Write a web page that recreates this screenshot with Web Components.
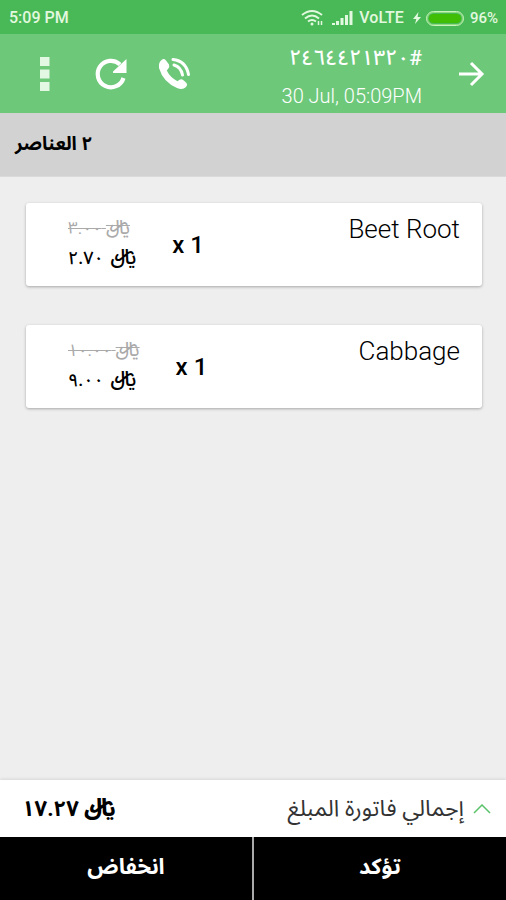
<!DOCTYPE html>
<html lang="ar" dir="rtl">
<head>
<meta charset="utf-8">
<meta name="viewport" content="width=device-width, initial-scale=1">
<title>Order</title>
<style>
html, body { margin: 0; }
body { font-family: Roboto, "Noto Sans Arabic", "DejaVu Sans", sans-serif; background: #eeeeee; color: #000; }
</style>
</head>
<body>
<order-screen></order-screen>
<script>
const define = (name, html, setup) => customElements.define(name, class extends HTMLElement {
  connectedCallback() {
    if (this.shadowRoot) return;
    const t = document.createElement('template');
    t.innerHTML = '<style>*{box-sizing:border-box}</style>' + html;
    this.attachShadow({ mode: 'open' }).append(t.content.cloneNode(true));
    if (setup) setup(this, this.shadowRoot);
  }
});

define('status-bar', `
<style>
:host { display: flex; direction: ltr; align-items: center; height: 34px; padding: 2px 8px 0 9px; background: #49b957; color: #e2f8df; font-size: 16px; line-height: 20px; font-weight: 500; }
.time { flex: 1; }
.wifi { margin-right: 8px; }
.signal { margin-right: 6px; }
.bolt { margin: 0 5px 0 9px; }
.battery { width: 38px; height: 15px; margin-right: 6px; padding: 2px; border: 1px solid #c9f3bd; border-radius: 8px; box-shadow: inset 0 0 0 1px #8fdc7c; }
.battery::before { content: ""; display: block; height: 100%; border-radius: 5px; background: #3fbe05; }
.pct { font-size: 15px; }
svg { display: block; }
</style>
<span class="time">5:09 PM</span>
<svg class="wifi" width="23" height="18" viewBox="0 0 23 18" fill="none" stroke="currentColor" stroke-width="2"><path d="M1 6Q11 -2 21 6M4 9.500Q11 3.500 18 9.500M7 12.500Q11 9.500 15 12.500"/><circle cx="11" cy="15" r="1.500" fill="currentColor" stroke="none"/><path d="M17.500 12v4M20.500 12v4" stroke-width="1.500"/></svg>
<svg class="signal" width="21" height="16" viewBox="0 0 21 16" fill="currentColor"><path d="M0 13h3v2H0zM4 11h3v4H4zM8.500 8h3v7h-3zM13 5h3v10h-3zM17.500 1h3v14h-3z"/></svg>
<span>VoLTE</span>
<svg class="bolt" width="8" height="12" viewBox="0 0 8 12" fill="currentColor"><path d="M5.500 0L0 7h3.300L2 12 8 5H4.600z"/></svg>
<span class="battery"></span>
<span class="pct">96%</span>`);

define('icon-button', `
<style>
:host { display: block; }
button { display: grid; place-items: center; width: 100%; height: 48px; padding: 0; border: 0; background: none; color: inherit; cursor: pointer; }
</style>
<button type="button"><slot></slot></button>`, (host, root) => root.querySelector('button').setAttribute('aria-label', host.getAttribute('label')));

define('app-header', `
<style>
:host { display: flex; align-items: center; height: 79px; padding: 0 9px 0 11px; background: #6dc87a; color: #fff; }
.titles { flex: 1; display: flex; flex-direction: column; gap: 12px; padding: 5px 23px 0 0; }
.id { font-size: 21px; line-height: 28px; font-weight: 500; }
.date { direction: ltr; text-align: right; font-size: 20px; line-height: 24px; font-weight: 300; }
icon-button { width: 52px; }
.call { width: 62px; }
.more { width: 68px; }
.refresh { width: 64px; }
svg { display: block; }
</style>
<icon-button label="Back"><svg width="28" height="26" viewBox="0 0 28 26" fill="none" stroke="currentColor" stroke-width="3"><path d="M2 13h23M14 2l11 11-11 11"/></svg></icon-button>
<div class="titles"><span class="id">#٢٤٦٤٤٢١٣٢٠</span><span class="date">30 Jul, 05:09PM</span></div>
<icon-button class="call" label="Call"><svg width="34" height="34" viewBox="0 0 34 34"><path fill="currentColor" d="M4.500 3Q7 1 9 3.500L12 7.500Q13 10 11 12L9.800 13.600Q13 20.500 20.500 24.200L22.500 22.800Q24.500 21.700 26.500 23.300L29.500 26Q31 28 29 30Q25.500 33.500 20 31Q6 25 2 11Q1.300 5.500 4.500 3Z"/><path fill="none" stroke="currentColor" stroke-width="3" stroke-linecap="round" d="M17 8Q24 10 25.500 18M16 2.500Q29 4 31.500 17.500"/></svg></icon-button>
<icon-button class="refresh" label="Refresh"><svg width="34" height="34" viewBox="0 0 34 34"><path fill="none" stroke="currentColor" stroke-width="4.200" d="M26 7.500A13.200 13.200 0 1 0 29.500 21"/><path fill="currentColor" d="M32.500 2v14H19V14.500z"/></svg></icon-button>
<icon-button class="more" label="More"><svg width="10" height="34" viewBox="0 0 10 34" fill="#e2f8e2"><path d="M0 0h9.500v9H0zM0 12.500h9.500v9H0zM0 25h9.500v9H0z"/></svg></icon-button>`);

define('section-title', `
<style>
:host { display: block; direction: ltr; height: 64px; padding: 18px 15px; background: #d2d2d2; border-bottom: 1px solid #dadada; }
h2 { margin: 0; direction: rtl; width: fit-content; font-size: 19px; line-height: 26px; font-weight: 700; }
</style>
<h2><slot></slot></h2>`);

define('riyal-price', `
<style>
:host { display: inline; }
.sign { font-size: var(--sign-size, 20px); line-height: 1; padding-left: var(--sign-gap, 0); }
</style>
<span class="sign">﷼</span> <slot></slot>`);

define('order-item', `
<style>
:host { display: flex; align-items: flex-start; height: 83px; padding: 10px 22px 0 42px; background: #fff; border-radius: 3px; box-shadow: 0 1px 3px #0000004d; }
.name { flex: 1; font-size: 26px; line-height: 32px; font-weight: 300; }
.qty { direction: ltr; margin: 16px 0 0 36px; font-size: 24px; line-height: 32px; font-weight: 500; }
.prices { display: flex; flex-direction: column; align-items: flex-end; font-size: 18px; line-height: 30px; --sign-size: 21px; --sign-gap: 2px; }
.now { font-weight: 500; }
s { color: #aaa; font-size: 17px; text-decoration-thickness: 1px; --sign-size: 20px; --sign-gap: 0px; }
</style>
<span class="name"><slot name="name"></slot></span>
<span class="qty"><slot name="qty"></slot></span>
<span class="prices"><s><slot name="old"></slot></s><span class="now"><slot name="price"></slot></span></span>`);

define('total-bar', `
<style>
:host { display: flex; align-items: center; height: 57px; padding: 0 15px 0 22px; background: #fff; box-shadow: 0 -1px 3px #0000001a; }
button { display: flex; align-items: center; gap: 9px; flex: 1; padding: 0; border: 0; background: none; font: inherit; font-size: 23px; line-height: 32px; color: #333; cursor: pointer; }
strong { font-size: 22px; line-height: 32px; --sign-size: 24px; }
</style>
<button type="button"><svg width="18" height="10" viewBox="0 0 18 10" fill="none" stroke="#5ac36a" stroke-width="1.500"><path d="M1 9l8-8 8 8"/></svg><span>إجمالي فاتورة المبلغ</span></button>
<strong><riyal-price>١٧.٢٧</riyal-price></strong>`);

define('action-bar', `
<style>
:host { display: grid; grid-template-columns: 1fr 1fr; gap: 2px; height: 63px; background: #aaa; }
button { border: 0; padding: 0 0 3px; background: #000; color: #fff; font: inherit; font-size: 22px; line-height: 32px; font-weight: 700; cursor: pointer; }
</style>
<button type="button">تؤكد</button><button type="button">انخفاض</button>`);

define('order-screen', `
<style>
:host { display: flex; flex-direction: column; min-height: 100vh; }
main { flex: 1; display: flex; flex-direction: column; gap: 39px; padding: 26px 24px 26px 26px; }
</style>
<status-bar></status-bar>
<app-header></app-header>
<section-title>٢ العناصر</section-title>
<main>
<order-item><span slot="name">Beet Root</span><span slot="qty">x 1</span><riyal-price slot="old">٣.٠٠</riyal-price><riyal-price slot="price">٢.٧٠</riyal-price></order-item>
<order-item><span slot="name">Cabbage</span><span slot="qty">x 1</span><riyal-price slot="old">١٠.٠٠</riyal-price><riyal-price slot="price">٩.٠٠</riyal-price></order-item>
</main>
<total-bar></total-bar>
<action-bar></action-bar>`);
</script>
</body>
</html>
